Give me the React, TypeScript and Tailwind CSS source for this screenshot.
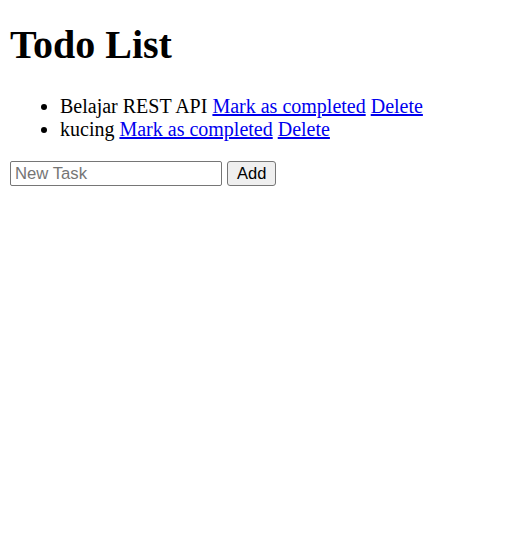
import { useState } from "react";

type Todo = { id: number; title: string; completed: boolean };

export default function App() {
  const [todos, setTodos] = useState<Todo[]>([
    { id: 1, title: "Belajar REST API", completed: false },
    { id: 2, title: "kucing", completed: false },
  ]);
  const [task, setTask] = useState("");

  const add = () => {
    if (!task.trim()) return;
    setTodos([...todos, { id: Date.now(), title: task, completed: false }]);
    setTask("");
  };

  return (
    <div className="p-[10px] font-['Liberation_Serif',serif] text-[20px] text-black bg-white min-h-[554px]">
      <h1 className="text-[40px] font-bold leading-[46px] mt-[12px] mb-[27px]">Todo List</h1>

      <ul className="list-disc pl-[50px] mb-[20px] leading-[23px]">
        {todos.map((todo) => (
          <li key={todo.id}>
            {todo.title}{" "}
            <a
              href="#"
              className="text-[#0000ee] underline"
              onClick={(e) => {
                e.preventDefault();
                setTodos(todos.map((t) => (t.id === todo.id ? { ...t, completed: true } : t)));
              }}
            >
              Mark as completed
            </a>{" "}
            <a
              href="#"
              className="text-[#0000ee] underline"
              onClick={(e) => {
                e.preventDefault();
                setTodos(todos.filter((t) => t.id !== todo.id));
              }}
            >
              Delete
            </a>
          </li>
        ))}
      </ul>

      <div className="flex items-center gap-[5px]">
        <input
          value={task}
          onChange={(e) => setTask(e.target.value)}
          placeholder="New Task"
          className="w-[212px] h-[25px] border border-[#767676] rounded-[2px] pl-[4px] pr-[3px] font-['Liberation_Sans',sans-serif] text-[16.7px] placeholder:text-[#757575] outline-none"
        />
        <button
          onClick={add}
          className="h-[25px] px-[9px] border border-[#767676] rounded-[3px] bg-[#efefef] font-['Liberation_Sans',sans-serif] text-[16.5px] leading-none"
        >
          Add
        </button>
      </div>
    </div>
  );
}
